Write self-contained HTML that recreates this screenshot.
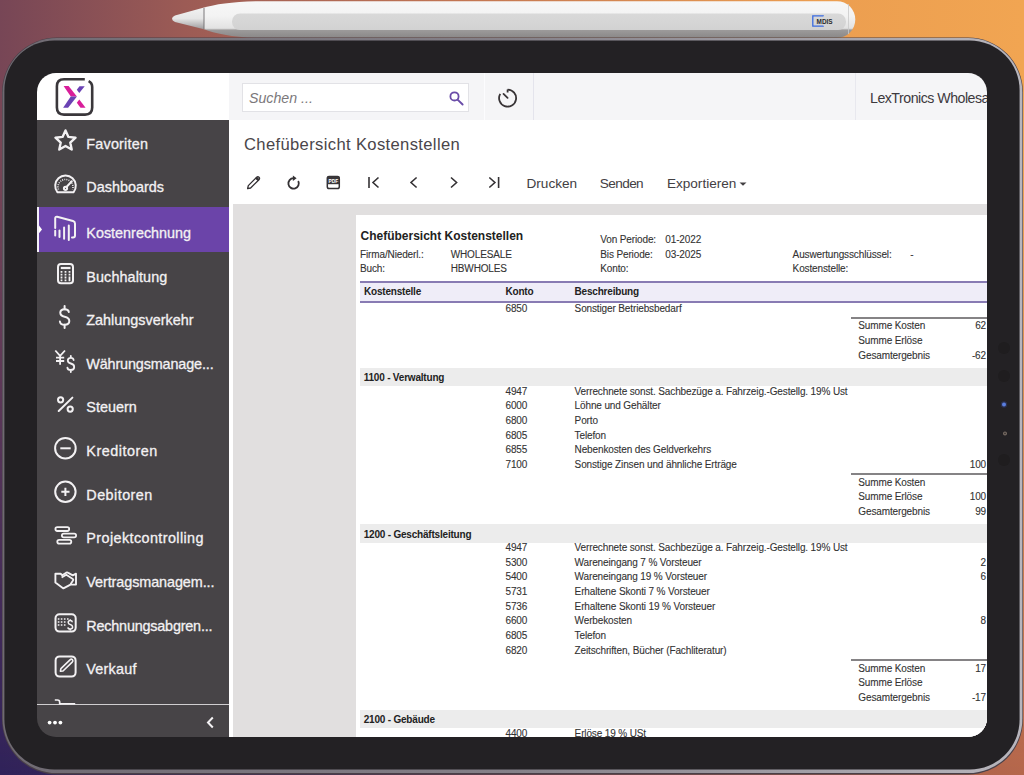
<!DOCTYPE html>
<html><head><meta charset="utf-8">
<style>
*{box-sizing:border-box}
html,body{margin:0;padding:0}
body{width:1024px;height:775px;overflow:hidden;position:relative;font-family:"Liberation Sans",sans-serif;background:#2a2030}
.a{position:absolute}
.t{position:absolute;line-height:0;white-space:nowrap}
#screen{position:absolute;left:37px;top:73px;width:950px;height:664px;border-radius:19px;overflow:hidden}
#pg{position:absolute;left:-37px;top:-73px;width:1024px;height:775px}
.si{color:#f3f1f3;-webkit-text-stroke:0.3px #f3f1f3}
.rp{color:#333;letter-spacing:-0.13px;-webkit-text-stroke:0.1px #333}
.rb{color:#222;font-weight:bold;letter-spacing:-0.2px}
</style></head><body>
<svg class="a" style="left:0;top:0" width="1024" height="775" viewBox="0 0 1024 775">
<defs>
<linearGradient id="gt" x1="0" y1="0" x2="1" y2="0">
<stop offset="0" stop-color="#774656"/><stop offset="0.18" stop-color="#9c5b55"/><stop offset="0.45" stop-color="#c27552"/><stop offset="0.8" stop-color="#ec9e50"/><stop offset="1" stop-color="#f1a552"/>
</linearGradient>
<linearGradient id="gb" x1="0" y1="0" x2="1" y2="0">
<stop offset="0" stop-color="#30225a"/><stop offset="0.3" stop-color="#443058"/><stop offset="0.55" stop-color="#7a4a50"/><stop offset="0.78" stop-color="#a25d4c"/><stop offset="1" stop-color="#b5674c"/>
</linearGradient>
<linearGradient id="gv" x1="0" y1="0" x2="0" y2="1">
<stop offset="0" stop-color="#fff"/><stop offset="0.2" stop-color="#fff"/><stop offset="1" stop-color="#000"/>
</linearGradient>
<mask id="mv"><rect width="1024" height="775" fill="url(#gv)"/></mask>
<linearGradient id="pen" x1="0" y1="0" x2="0" y2="1">
<stop offset="0" stop-color="#f7f7f7"/><stop offset="0.4" stop-color="#f3f3f3"/><stop offset="0.74" stop-color="#e2e2e2"/><stop offset="0.79" stop-color="#9c9a9a"/><stop offset="1" stop-color="#8a8888"/>
</linearGradient>
<linearGradient id="tip" x1="0" y1="0" x2="0" y2="1"><stop offset="0" stop-color="#f2f2f2"/><stop offset="0.5" stop-color="#e6e6e6"/><stop offset="1" stop-color="#9e9c9e"/></linearGradient>
<linearGradient id="band" x1="0" y1="0" x2="0" y2="1"><stop offset="0" stop-color="#d9d9d9"/><stop offset="1" stop-color="#d2d2d2"/></linearGradient>
</defs>
<rect width="1024" height="775" fill="url(#gb)"/>
<rect width="1024" height="775" fill="url(#gt)" mask="url(#mv)"/>
<!-- pencil -->
<path d="M204 7.6 C214 4.5 232 1.6 256 1.2 H837 A18.3 18.3 0 0 1 837 37.8 H256 C232 37.4 214 33 204 29.2 Z" fill="url(#pen)"/>
<path d="M204 7.6 L175 15.4 Q169 18.6 175 22 L204 29.2 Z" fill="url(#tip)"/>
<path d="M204 8 V29" stroke="#6e6c6e" stroke-width="0.9"/>
<rect x="232" y="13.5" width="614" height="16.5" rx="8" fill="url(#band)"/>
<path d="M848.5 4 V34" stroke="#c9c9c9" stroke-width="0.8"/>
<path d="M823.2 16.2 V15.8 H812.8 V26.2 H823.2 V25.8" fill="none" stroke="#3a6be0" stroke-width="1.3"/>
<text x="816.6" y="23.6" font-family="Liberation Sans" font-weight="bold" font-size="6.6" textLength="16" lengthAdjust="spacingAndGlyphs" fill="#2a2a2a">MDIS</text>
<!-- ipad -->
<linearGradient id="rim" x1="0" y1="0" x2="1" y2="0"><stop offset="0" stop-color="#6f6a72"/><stop offset="0.5" stop-color="#858189"/><stop offset="1" stop-color="#b8b6bd"/></linearGradient>
<rect x="2" y="37.5" width="1021" height="737" rx="55" fill="#4a4048"/>
<rect x="2.6" y="38.1" width="1019.8" height="735" rx="54.4" fill="url(#rim)"/>
<rect x="4.4" y="40.4" width="1015.2" height="729.2" rx="50" fill="#232124"/>
<circle cx="1004" cy="348" r="6" fill="#1f1d1f"/>
<circle cx="1004" cy="376" r="6" fill="#1f1d1f"/>
<circle cx="1004" cy="460" r="6" fill="#1f1d1f"/>
<circle cx="1004" cy="404.5" r="3.2" fill="#2a3050"/>
<circle cx="1004" cy="404.5" r="2" fill="#5a7ee0"/>
<circle cx="1005" cy="433.4" r="2" fill="#7a6e66"/>
<circle cx="1005" cy="433.4" r="0.9" fill="#3a3432"/>
</svg>
<div id="screen"><div id="pg">
<div class="a" style="left:37px;top:73px;width:192px;height:47px;background:#fff;"></div>
<div class="a" style="left:229px;top:120px;width:758px;height:617px;background:#fff;"></div>
<div class="a" style="left:229px;top:73px;width:758px;height:47px;background:#f5f5f7;"></div>
<div class="a" style="left:855px;top:73px;width:1px;height:47px;background:#e8e8ee;"></div>
<div class="a" style="left:242px;top:82.5px;width:227px;height:29px;background:#fff;border:1px solid #e2e2e6"></div>
<div class="t " style="left:249.00px;top:98.18px;font-size:14.2px;font-style:italic;color:#7b787b">Suchen ...</div>
<div class="a" style="left:483.5px;top:73px;width:1px;height:47px;background:#fcfcfe;"></div>
<div class="a" style="left:532.5px;top:73px;width:1px;height:47px;background:#e4e4ec;"></div>
<div class="t " style="left:870.00px;top:97.98px;font-size:14.2px;color:#3d393e;letter-spacing:-0.5px">LexTronics Wholesale</div>
<div class="a" style="left:37px;top:120px;width:192px;height:617px;background:#474447;"></div>
<div class="a" style="left:37px;top:207px;width:192px;height:45px;background:#6b44a9;"></div>
<div class="a" style="left:37px;top:207px;width:2px;height:45px;background:#f4f0f8;"></div>
<div class="t si" style="left:86.30px;top:143.51px;font-size:14.4px;letter-spacing:0.2px">Favoriten</div>
<div class="t si" style="left:86.30px;top:186.91px;font-size:14.4px;letter-spacing:0px">Dashboards</div>
<div class="t si" style="left:86.30px;top:232.51px;font-size:14.4px;letter-spacing:0px">Kostenrechnung</div>
<div class="t si" style="left:86.30px;top:276.71px;font-size:14.4px;letter-spacing:0.1px">Buchhaltung</div>
<div class="t si" style="left:86.30px;top:320.01px;font-size:14.4px;letter-spacing:0px">Zahlungsverkehr</div>
<div class="t si" style="left:86.30px;top:363.61px;font-size:14.4px;letter-spacing:-0.14px">Währungsmanage...</div>
<div class="t si" style="left:86.30px;top:407.01px;font-size:14.4px;letter-spacing:0px">Steuern</div>
<div class="t si" style="left:86.30px;top:451.01px;font-size:14.4px;letter-spacing:0.5px">Kreditoren</div>
<div class="t si" style="left:86.30px;top:494.71px;font-size:14.4px;letter-spacing:0.45px">Debitoren</div>
<div class="t si" style="left:86.30px;top:538.41px;font-size:14.4px;letter-spacing:0.4px">Projektcontrolling</div>
<div class="t si" style="left:86.30px;top:581.81px;font-size:14.4px;letter-spacing:-0.08px">Vertragsmanagem...</div>
<div class="t si" style="left:86.30px;top:625.91px;font-size:14.4px;letter-spacing:-0.2px">Rechnungsabgren...</div>
<div class="t si" style="left:86.30px;top:669.21px;font-size:14.4px;letter-spacing:0.24px">Verkauf</div>
<div class="a" style="left:37px;top:704px;width:192px;height:1.3px;background:#d0ced0;"></div>
<div class="t " style="left:244.00px;top:144.55px;font-size:16.6px;color:#4a464a;letter-spacing:0.35px">Chefübersicht Kostenstellen</div>
<div class="t " style="left:526.50px;top:183.69px;font-size:13.6px;color:#434043;letter-spacing:0px">Drucken</div>
<div class="t " style="left:599.80px;top:183.69px;font-size:13.6px;color:#434043;letter-spacing:-0.6px">Senden</div>
<div class="t " style="left:666.90px;top:183.69px;font-size:13.6px;color:#434043;letter-spacing:0px">Exportieren</div>
<div class="a" style="left:233px;top:204px;width:754px;height:533px;background:#e1dfdf;"></div>
<div class="a" style="left:356px;top:215px;width:631px;height:522px;background:#fff;"></div>
<div class="t rb" style="left:360.50px;top:235.64px;font-size:12px;letter-spacing:0">Chefübersicht Kostenstellen</div>
<div class="t rp" style="left:360.00px;top:254.53px;font-size:10px;">Firma/Niederl.:</div>
<div class="t rp" style="left:450.70px;top:254.53px;font-size:10px;">WHOLESALE</div>
<div class="t rp" style="left:360.00px;top:269.04px;font-size:10px;">Buch:</div>
<div class="t rp" style="left:450.70px;top:269.04px;font-size:10px;">HBWHOLES</div>
<div class="t rp" style="left:600.30px;top:240.13px;font-size:10px;">Von Periode:</div>
<div class="t rp" style="left:665.30px;top:240.13px;font-size:10px;">01-2022</div>
<div class="t rp" style="left:600.30px;top:254.53px;font-size:10px;">Bis Periode:</div>
<div class="t rp" style="left:665.30px;top:254.53px;font-size:10px;">03-2025</div>
<div class="t rp" style="left:600.30px;top:269.14px;font-size:10px;">Konto:</div>
<div class="t rp" style="left:792.60px;top:254.53px;font-size:10px;">Auswertungsschlüssel:</div>
<div class="t rp" style="left:910.30px;top:254.53px;font-size:10px;">-</div>
<div class="t rp" style="left:792.60px;top:269.14px;font-size:10px;">Kostenstelle:</div>
<div class="a" style="left:360px;top:281px;width:627px;height:22px;background:#efedf8;border-top:2px solid #887bb3;border-bottom:2px solid #887bb3"></div>
<div class="t rb" style="left:364.00px;top:292.14px;font-size:10px;">Kostenstelle</div>
<div class="t rb" style="left:505.50px;top:292.14px;font-size:10px;">Konto</div>
<div class="t rb" style="left:574.60px;top:292.14px;font-size:10px;">Beschreibung</div>
<div class="t rp" style="left:505.50px;top:308.74px;font-size:10px;">6850</div>
<div class="t rp" style="left:574.60px;top:308.74px;font-size:10px;">Sonstiger Betriebsbedarf</div>
<div class="a" style="left:851px;top:317px;width:136px;height:1.6px;background:#858385;"></div>
<div class="t rp" style="left:858.30px;top:326.34px;font-size:10px;">Summe Kosten</div>
<div class="t rp" style="right:38.00px;top:326.34px;font-size:10px;">62</div>
<div class="t rp" style="left:858.30px;top:340.94px;font-size:10px;">Summe Erlöse</div>
<div class="t rp" style="left:858.30px;top:355.54px;font-size:10px;">Gesamtergebnis</div>
<div class="t rp" style="right:38.00px;top:355.54px;font-size:10px;">-62</div>
<div class="a" style="left:360px;top:367.7px;width:627px;height:18.3px;background:#ececec;"></div>
<div class="t rb" style="left:363.70px;top:377.94px;font-size:10px;">1100 - Verwaltung</div>
<div class="t rp" style="left:505.50px;top:391.64px;font-size:10px;">4947</div>
<div class="t rp" style="left:574.60px;top:391.64px;font-size:10px;">Verrechnete sonst. Sachbezüge a. Fahrzeig.-Gestellg. 19% Ust</div>
<div class="t rp" style="left:505.50px;top:406.27px;font-size:10px;">6000</div>
<div class="t rp" style="left:574.60px;top:406.27px;font-size:10px;">Löhne und Gehälter</div>
<div class="t rp" style="left:505.50px;top:420.90px;font-size:10px;">6800</div>
<div class="t rp" style="left:574.60px;top:420.90px;font-size:10px;">Porto</div>
<div class="t rp" style="left:505.50px;top:435.53px;font-size:10px;">6805</div>
<div class="t rp" style="left:574.60px;top:435.53px;font-size:10px;">Telefon</div>
<div class="t rp" style="left:505.50px;top:450.16px;font-size:10px;">6855</div>
<div class="t rp" style="left:574.60px;top:450.16px;font-size:10px;">Nebenkosten des Geldverkehrs</div>
<div class="t rp" style="left:505.50px;top:464.79px;font-size:10px;">7100</div>
<div class="t rp" style="left:574.60px;top:464.79px;font-size:10px;">Sonstige Zinsen und ähnliche Erträge</div>
<div class="t rp" style="right:38.00px;top:464.79px;font-size:10px;">100</div>
<div class="a" style="left:851px;top:473.3px;width:136px;height:1.6px;background:#858385;"></div>
<div class="t rp" style="left:858.30px;top:482.64px;font-size:10px;">Summe Kosten</div>
<div class="t rp" style="left:858.30px;top:497.24px;font-size:10px;">Summe Erlöse</div>
<div class="t rp" style="right:38.00px;top:497.24px;font-size:10px;">100</div>
<div class="t rp" style="left:858.30px;top:511.84px;font-size:10px;">Gesamtergebnis</div>
<div class="t rp" style="right:38.00px;top:511.84px;font-size:10px;">99</div>
<div class="a" style="left:360px;top:524.4px;width:627px;height:18.3px;background:#ececec;"></div>
<div class="t rb" style="left:363.70px;top:534.63px;font-size:10px;">1200 - Geschäftsleitung</div>
<div class="t rp" style="left:505.50px;top:548.13px;font-size:10px;">4947</div>
<div class="t rp" style="left:574.60px;top:548.13px;font-size:10px;">Verrechnete sonst. Sachbezüge a. Fahrzeig.-Gestellg. 19% Ust</div>
<div class="t rp" style="left:505.50px;top:562.76px;font-size:10px;">5300</div>
<div class="t rp" style="left:574.60px;top:562.76px;font-size:10px;">Wareneingang 7 % Vorsteuer</div>
<div class="t rp" style="right:38.00px;top:562.76px;font-size:10px;">2</div>
<div class="t rp" style="left:505.50px;top:577.39px;font-size:10px;">5400</div>
<div class="t rp" style="left:574.60px;top:577.39px;font-size:10px;">Wareneingang 19 % Vorsteuer</div>
<div class="t rp" style="right:38.00px;top:577.39px;font-size:10px;">6</div>
<div class="t rp" style="left:505.50px;top:592.02px;font-size:10px;">5731</div>
<div class="t rp" style="left:574.60px;top:592.02px;font-size:10px;">Erhaltene Skonti 7 % Vorsteuer</div>
<div class="t rp" style="left:505.50px;top:606.65px;font-size:10px;">5736</div>
<div class="t rp" style="left:574.60px;top:606.65px;font-size:10px;">Erhaltene Skonti 19 % Vorsteuer</div>
<div class="t rp" style="left:505.50px;top:621.28px;font-size:10px;">6600</div>
<div class="t rp" style="left:574.60px;top:621.28px;font-size:10px;">Werbekosten</div>
<div class="t rp" style="right:38.00px;top:621.28px;font-size:10px;">8</div>
<div class="t rp" style="left:505.50px;top:635.91px;font-size:10px;">6805</div>
<div class="t rp" style="left:574.60px;top:635.91px;font-size:10px;">Telefon</div>
<div class="t rp" style="left:505.50px;top:650.54px;font-size:10px;">6820</div>
<div class="t rp" style="left:574.60px;top:650.54px;font-size:10px;">Zeitschriften, Bücher (Fachliteratur)</div>
<div class="a" style="left:851px;top:659.3px;width:136px;height:1.6px;background:#858385;"></div>
<div class="t rp" style="left:858.30px;top:668.63px;font-size:10px;">Summe Kosten</div>
<div class="t rp" style="right:38.00px;top:668.63px;font-size:10px;">17</div>
<div class="t rp" style="left:858.30px;top:683.23px;font-size:10px;">Summe Erlöse</div>
<div class="t rp" style="left:858.30px;top:697.83px;font-size:10px;">Gesamtergebnis</div>
<div class="t rp" style="right:38.00px;top:697.83px;font-size:10px;">-17</div>
<div class="a" style="left:360px;top:710px;width:627px;height:18.3px;background:#ececec;"></div>
<div class="t rb" style="left:363.70px;top:720.24px;font-size:10px;">2100 - Gebäude</div>
<div class="t rp" style="left:505.50px;top:734.33px;font-size:10px;">4400</div>
<div class="t rp" style="left:574.60px;top:734.33px;font-size:10px;">Erlöse 19 % USt</div>
<svg class="a" style="left:0;top:0" width="1024" height="775" viewBox="0 0 1024 775" fill="none" stroke="#f3f1f3" stroke-width="2">
<!-- star -->
<path d="M65.50 130.40 L68.44 136.95 L75.58 137.72 L70.26 142.55 L71.73 149.58 L65.50 146.00 L59.27 149.58 L60.74 142.55 L55.42 137.72 L62.56 136.95 Z" stroke-width="2.35" stroke-linejoin="round"/>
<!-- gauge -->
<path d="M57.5 192.3 A10.3 10.3 0 1 1 73.5 192.3 Z"/>
<circle cx="65.5" cy="188.3" r="1.6"/>
<path d="M66.5 187 L71.8 181.3" stroke-linecap="round"/>
<path d="M58.4 189.4 A7.5 7.5 0 1 1 72.6 189.4" stroke-width="1.6" stroke-dasharray="0.9 1.25"/>
<!-- kostenrechnung -->
<path d="M55.2 228 V218.5 Q55.2 216.5 57.2 216.8 L73 221 Q75 221.6 75 223.5 V235.5 Q75 237.5 73 237.5 H72" stroke-linecap="round"/>
<path d="M55.2 230.8 V235.4 M59.5 230.4 V237 M64.1 227.4 V238.8 M68.8 225.4 V240" stroke-linecap="round"/>
<!-- calculator -->
<rect x="58" y="264" width="15" height="19.2" rx="3"/>
<path d="M60.8 268 H70.5" stroke-width="2.2"/>
<path d="M61.5 271.8 v0.01 M65.5 271.8 v0.01 M69.5 271.8 v0.01 M61.5 274.7 v0.01 M65.5 274.7 v0.01 M69.5 274.7 v0.01 M61.5 277.5 v0.01 M65.5 277.5 v0.01 M61.5 280.3 v0.01 M65.5 280.3 v0.01 M69.5 277.5 V280.3" stroke-width="1.8" stroke-linecap="square"/>
<!-- dollar -->
<path d="M68.8 312 Q68.5 309.3 64.6 309.3 Q60.3 309.3 60.3 312.8 Q60.3 315.8 64.6 316.8 Q69.3 317.8 69.3 321 Q69.3 324.8 64.6 324.8 Q60.2 324.8 59.9 321.5" stroke-linecap="round"/>
<path d="M64.6 306 V309.3 M64.6 324.8 V328" stroke-linecap="round"/>
<!-- yen dollar -->
<path d="M55.3 350.5 L60.1 355.8 L65 350.5 M60.1 355.8 V364.8 M56 357.6 H64.2 M56 361 H64.2" stroke-width="1.8"/>
<path d="M73.6 360 Q73.4 357.8 70.8 357.8 Q67.8 357.8 67.8 360.5 Q67.8 362.8 70.8 363.5 Q74.2 364.3 74.2 367 Q74.2 370 70.8 370 Q67.6 370 67.4 367.6 M70.8 355.8 V357.8 M70.8 370 V372" stroke-width="1.8" stroke-linecap="round"/>
<!-- percent -->
<circle cx="60.6" cy="399.8" r="2.6"/>
<circle cx="70.2" cy="409.1" r="2.6"/>
<path d="M58.7 411 L72.4 397.6" stroke-linecap="round"/>
<!-- minus circle -->
<circle cx="65.4" cy="448.2" r="10.3"/>
<path d="M60.3 448.3 H70.7"/>
<!-- plus circle -->
<circle cx="65.4" cy="491.8" r="10.2"/>
<path d="M61.3 491.8 H69.5 M65.4 487.7 V496"/>
<!-- projekt -->
<rect x="55.4" y="527.2" width="13.8" height="3.8" rx="1.9" stroke-width="1.8"/>
<rect x="61.9" y="533.6" width="14.2" height="3.8" rx="1.9" stroke-width="1.8"/>
<rect x="57.3" y="539.9" width="14" height="3.8" rx="1.9" stroke-width="1.8"/>
<!-- handshake -->
<path d="M55.4 573.7 H60.6 L62.3 575.3 L66.2 572.7 Q67.2 572.2 68.2 572.8 L72.8 575.3 L76 573.7 V584.6 H70.5 L63.4 588.4 L55.4 582.6 Z" stroke-width="1.9" stroke-linejoin="round"/>
<path d="M61.6 577.6 L66.3 574.8 L72.8 578.9 Q73.7 579.6 73 580.5 L70.5 584.2" stroke-width="1.8" stroke-linejoin="round"/>
<!-- rechnungsabgrenzung -->
<rect x="55.5" y="614.2" width="20.2" height="17.4" rx="4"/>
<path d="M58.6 619 v0.01 M61.6 619 v0.01 M64.7 619 v0.01 M67.8 619 v0.01 M58.6 622 v0.01 M61.6 622 v0.01 M64.7 622 v0.01 M58.6 625 v0.01 M61.6 625 v0.01 M64.7 625 v0.01" stroke-width="1.6" stroke-linecap="square"/>
<path d="M72.3 622.2 Q72.2 620.6 70.3 620.6 Q68.2 620.6 68.2 622.5 Q68.2 624 70.3 624.6 Q72.6 625.2 72.6 627 Q72.6 629 70.3 629 Q68 629 67.9 627.4 M70.3 619.2 V620.6 M70.3 629 V630.5" stroke-width="1.5"/>
<!-- verkauf -->
<rect x="55.6" y="656.4" width="20" height="20.2" rx="4"/>
<path d="M60.4 671.2 L60.9 668.6 L70 659.8 Q71.4 658.6 72.5 659.8 Q73.4 661 72.2 662.2 L63 671 Z" stroke-width="1.6" stroke-linejoin="round"/>
<!-- partial icon -->
<path d="M54.8 700 H57.4 Q59.7 700 59.7 702.3 V704.5" stroke-width="1.7"/>
<path d="M60 703.8 H75.2" stroke-width="1.4"/>
<!-- footer -->
<circle cx="49.6" cy="722.6" r="1.9" fill="#fff" stroke="none"/>
<circle cx="55" cy="722.6" r="1.9" fill="#fff" stroke="none"/>
<circle cx="60.4" cy="722.6" r="1.9" fill="#fff" stroke="none"/>
<path d="M212.8 717.5 L208 722.5 L212.8 727.5" stroke-width="2"/>
<!-- active arrow -->
<path d="M39 225.6 L42 229.4 L39 233.2 Z" fill="#fff" stroke="none"/>
<!-- logo -->
<path d="M84.8 79.2 H64 Q56.9 79.2 56.9 86.3 V107.5 Q56.9 114.6 64 114.6 H85.1 Q92.2 114.6 92.2 107.5 V87" stroke="#3a373b" stroke-width="2.6"/>
<path d="M88.6 81.2 Q92.2 83 92.2 87" stroke="#3a373b" stroke-width="2.6"/>
<path d="M63.6 86.1 H68.6 L76.9 96.5 H70.8 Z" fill="#d81e9a" stroke="none"/>
<path d="M70.8 96.5 H76.9 L68.1 107.7 H63.1 Z" fill="#6a42b4" stroke="none"/>
<path d="M79.5 86.2 H84.7 L79.3 93 L76.8 89.8 Z" fill="#6a42b4" stroke="none"/>
<path d="M79.3 99.6 L85.6 107.7 H80.5 L76.8 102.8 Z" fill="#d81e9a" stroke="none"/>
<!-- search -->
<circle cx="454.5" cy="96.4" r="4.1" stroke="#6a4ca8" stroke-width="1.8"/>
<path d="M457.6 99.6 L462.6 104.5" stroke="#6a4ca8" stroke-width="1.9" stroke-linecap="round"/>
<!-- clock -->
<path d="M507.6 89.6 A8.5 8.5 0 1 1 500.24 93.85" stroke="#383436" stroke-width="1.8"/>
<path d="M507.6 89.6 V92.4" stroke="#383436" stroke-width="1.8"/>
<path d="M503.5 93.9 L507.6 97.9" stroke="#383436" stroke-width="1.8" stroke-linecap="round"/>
<!-- toolbar -->
<g stroke="#343134" stroke-width="1.6">
<path d="M247.6 188.6 L248.3 185.6 L256.6 177.3 Q257.9 176.2 259 177.3 Q260.1 178.4 259 179.7 L250.6 188 Z" stroke-width="1.3" stroke-linejoin="round"/>
<path d="M256.3 177.8 L258.6 180.1" stroke-width="2.6"/>
<path d="M298.2 181 A5.2 5.2 0 1 1 293.5 178.2" stroke-width="1.8"/>
<path d="M292.9 175.4 L296.6 178.2 L292.9 181 Z" fill="#343134" stroke="none"/>
<rect x="327.3" y="176.6" width="12" height="12" rx="1.8" stroke-width="1.5"/>
<rect x="327.3" y="176.6" width="12" height="7.6" fill="#3a373a" stroke="none"/>
<path d="M369 177 V188 M378.5 177.5 L373 182.5 L378.5 187.5 M416.6 177.5 L411 182.5 L416.6 187.5 M451 177.5 L456.6 182.5 L451 187.5 M489.3 177.5 L494.9 182.5 L489.3 187.5 M498.6 177 V188"/>
</g>
<text x="328.6" y="182.6" font-family="Liberation Sans" font-weight="bold" font-size="5.6" textLength="9.6" lengthAdjust="spacingAndGlyphs" fill="#fff" stroke="none">PDF</text>
<path d="M739.5 182.5 H746.5 L743 185.8 Z" fill="#434043" stroke="none"/>
</svg>
</div></div>
</body></html>
